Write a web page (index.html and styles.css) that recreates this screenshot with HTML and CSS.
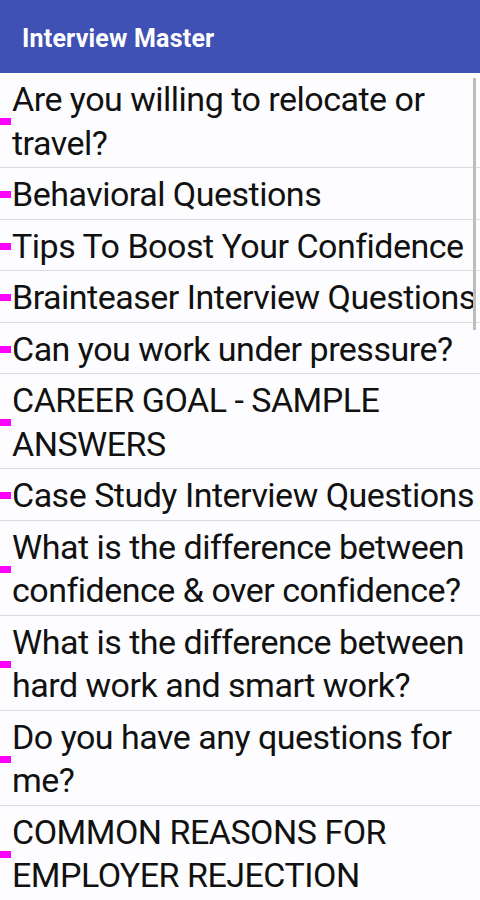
FILE: index.html
```html
<!DOCTYPE html>
<html lang="en">
  <head>
    <meta charset="UTF-8" />
    <title>Interview Master</title>
    <link rel="stylesheet" href="styles.css">
  </head>

  <body>
    <header class="toolbar">
      <h1 class="title">Interview Master</h1>
    </header>
    <div class="list-wrap">
      <ul class="topics">
        <li><span class="mark"></span><span class="label">Are you willing to relocate or travel?</span></li>
        <li><span class="mark"></span><span class="label">Behavioral Questions</span></li>
        <li><span class="mark"></span><span class="label">Tips To Boost Your Confidence</span></li>
        <li><span class="mark"></span><span class="label">Brainteaser Interview Questions</span></li>
        <li><span class="mark"></span><span class="label">Can you work under pressure?</span></li>
        <li><span class="mark"></span><span class="label">CAREER GOAL - SAMPLE ANSWERS</span></li>
        <li><span class="mark"></span><span class="label">Case Study Interview Questions</span></li>
        <li><span class="mark"></span><span class="label">What is the difference between confidence &amp; over confidence?</span></li>
        <li><span class="mark"></span><span class="label">What is the difference between hard work and smart work?</span></li>
        <li><span class="mark"></span><span class="label">Do you have any questions for me?</span></li>
        <li><span class="mark"></span><span class="label">COMMON REASONS FOR EMPLOYER REJECTION</span></li>
      </ul>
      <div class="scrollbar"></div>
    </div>
  </body>
</html>
```

FILE: styles.css
```css
html,
body {
  margin: 0;
  padding: 0;
  height: 100%;
  overflow: hidden;
  background: #fdfdff;
  font-family: Roboto, "Liberation Sans", sans-serif;
}

.toolbar {
  height: 73px;
  background: #3f51b5;
  display: flex;
  align-items: center;
  padding-left: 22px;
}

.title {
  margin: 4px 0 0;
  color: #fff;
  font-size: 25px;
  font-weight: 700;
  letter-spacing: 0.2px;
}

.list-wrap {
  position: relative;
}

.topics {
  list-style: none;
  margin: 0;
  padding: 0;
}

.topics li {
  display: flex;
  align-items: center;
  padding: 5px 0 2px;
  border-bottom: 1px solid #dcdcdc;
}

.mark {
  flex: none;
  width: 11px;
  height: 7px;
  background: #ff00ff;
  margin-right: 1px;
}

.label {
  font-size: 34px;
  line-height: 43.5px;
  letter-spacing: -0.5px;
  color: #111;
}

/* thin scroll indicator on the right */
.scrollbar {
  position: absolute;
  top: 5px;
  right: 4px;
  width: 3px;
  height: 252px;
  background: #bdbdbd;
}
```
